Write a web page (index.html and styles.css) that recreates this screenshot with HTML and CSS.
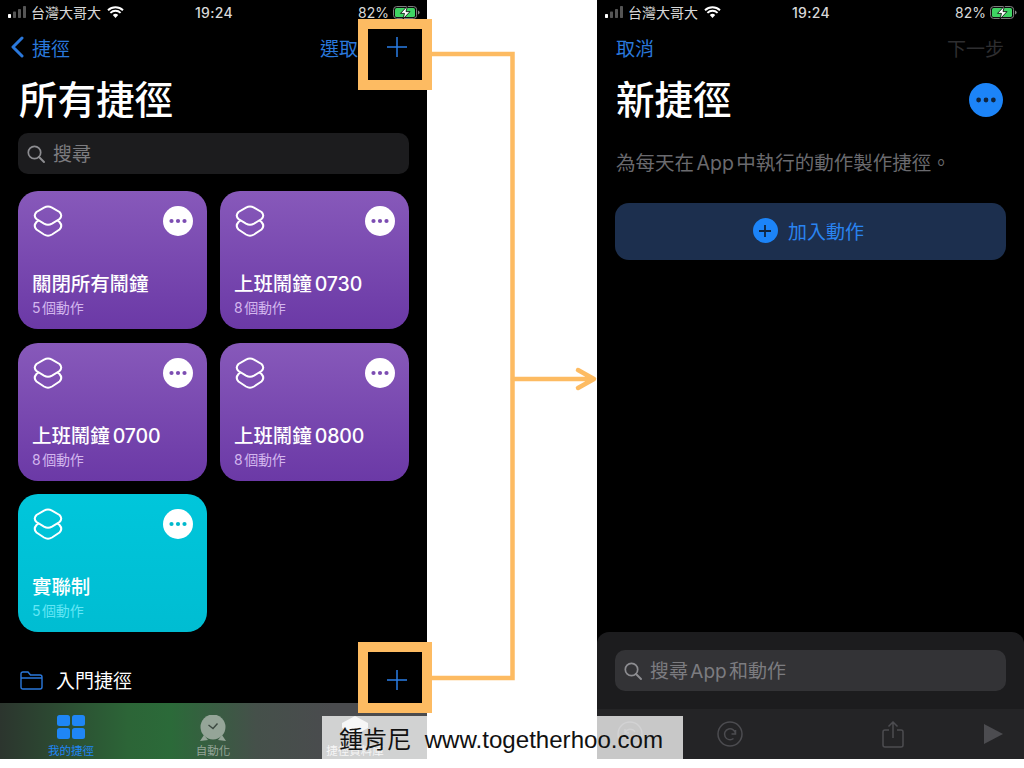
FILE: index.html
```html
<!DOCTYPE html>
<html lang="zh-Hant">
<head>
    <meta charset="UTF-8">
    <meta name="viewport" content="width=device-width, initial-scale=1.0">
    <title>所有捷徑</title>
    <link rel="stylesheet" href="styles.css">
</head>
<body>

<svg class="sprite" width="0" height="0">
    <symbol id="stack" viewBox="0 0 30 33">
        <path d="M11 2.6Q15 .6 19 2.6L26.5 7Q30 10.5 26.5 14L19 18.7Q15 21 11 18.7L3.5 14Q0 10.5 3.5 7Z" fill="none" stroke="currentColor" stroke-width="2"/>
        <path d="M5.5 15.5L3.5 17Q0 21 3.5 24.5L11 29.5Q15 32 19 29.5L26.5 24.5Q30 21 26.5 17L24.5 15.5" fill="none" stroke="currentColor" stroke-width="2"/>
    </symbol>
    <symbol id="dots" viewBox="0 0 30 30">
        <circle cx="8.5" cy="15" r="2.1" fill="currentColor"/>
        <circle cx="15" cy="15" r="2.1" fill="currentColor"/>
        <circle cx="21.5" cy="15" r="2.1" fill="currentColor"/>
    </symbol>
    <symbol id="plus" viewBox="0 0 20 20">
        <path d="M10 0V20M0 10H20" fill="none" stroke="currentColor"/>
    </symbol>
    <symbol id="search" viewBox="0 0 18 18">
        <circle cx="7.5" cy="7.5" r="6.2" fill="none" stroke="currentColor" stroke-width="1.7"/>
        <path d="M12 12L17 17" fill="none" stroke="currentColor" stroke-width="1.9" stroke-linecap="round"/>
    </symbol>
    <symbol id="signal" viewBox="0 0 18 12">
        <rect x="0" y="8" width="3" height="4" rx=".7" fill="#fff"/>
        <rect x="5" y="5.5" width="3" height="6.5" rx=".7" fill="#555"/>
        <rect x="10" y="3" width="3" height="9" rx=".7" fill="#555"/>
        <rect x="15" y="0" width="3" height="12" rx=".7" fill="#555"/>
    </symbol>
    <symbol id="wifi" viewBox="0 0 17 12">
        <path d="M1 4.3A10.8 10.8 0 0 1 16 4.3M3.4 6.9A7.3 7.3 0 0 1 13.6 6.9" fill="none" stroke="#fff" stroke-width="1.9"/>
        <path d="M5.8 9.1A3.9 3.9 0 0 1 11.2 9.1L8.5 12Z" fill="#fff"/>
    </symbol>
    <symbol id="battery" viewBox="0 0 27 13">
        <rect x=".6" y=".6" width="23" height="11.8" rx="3" fill="none" stroke="#8a8a8a" stroke-width="1"/>
        <rect x="2" y="2" width="20" height="9" rx="1.6" fill="#3fd463"/>
        <path d="M25 4.5Q26.6 5 26.6 6.5T25 8.5Z" fill="#8a8a8a"/>
        <path d="M14.5 0L7.5 7.4H11.5L10 13L17 5.6H13Z" fill="#fff" stroke="#000" stroke-width=".8"/>
    </symbol>
</svg>

<div class="stage">

    <div class="phone">
        <div class="status">
            <div class="status-left">
                <svg class="signal"><use href="#signal"/></svg>
                <span>台灣大哥大</span>
                <svg class="wifi"><use href="#wifi"/></svg>
            </div>
            <span class="status-time">19:24</span>
            <div class="status-right">
                <span>82%</span>
                <svg class="battery"><use href="#battery"/></svg>
            </div>
        </div>

        <div class="nav nav-shortcuts">
            <a class="nav-back">
                <svg class="chevron" viewBox="0 0 14 22"><path d="M12 2L3 11L12 20" fill="none" stroke="currentColor" stroke-width="3" stroke-linecap="round" stroke-linejoin="round"/></svg>
                <span>捷徑</span>
            </a>
            <span class="nav-select">選取</span>
            <svg class="plus"><use href="#plus"/></svg>
        </div>

        <h1 class="title title-left">所有捷徑</h1>

        <div class="search search-top">
            <svg class="search-icon"><use href="#search"/></svg>
            <span>搜尋</span>
        </div>

        <div class="cards">
            <div class="card">
                <div class="card-top">
                    <svg class="stack"><use href="#stack"/></svg>
                    <svg class="more"><use href="#dots"/></svg>
                </div>
                <div class="card-name">關閉所有鬧鐘</div>
                <div class="card-count">5 個動作</div>
            </div>
            <div class="card">
                <div class="card-top">
                    <svg class="stack"><use href="#stack"/></svg>
                    <svg class="more"><use href="#dots"/></svg>
                </div>
                <div class="card-name">上班鬧鐘 0730</div>
                <div class="card-count">8 個動作</div>
            </div>
            <div class="card">
                <div class="card-top">
                    <svg class="stack"><use href="#stack"/></svg>
                    <svg class="more"><use href="#dots"/></svg>
                </div>
                <div class="card-name">上班鬧鐘 0700</div>
                <div class="card-count">8 個動作</div>
            </div>
            <div class="card">
                <div class="card-top">
                    <svg class="stack"><use href="#stack"/></svg>
                    <svg class="more"><use href="#dots"/></svg>
                </div>
                <div class="card-name">上班鬧鐘 0800</div>
                <div class="card-count">8 個動作</div>
            </div>
            <div class="card card-cyan">
                <div class="card-top">
                    <svg class="stack"><use href="#stack"/></svg>
                    <svg class="more"><use href="#dots"/></svg>
                </div>
                <div class="card-name">實聯制</div>
                <div class="card-count">5 個動作</div>
            </div>
        </div>

        <div class="folder-row">
            <svg class="folder" viewBox="0 0 23 19"><path d="M1 16V3Q1 1 3 1H8L10.5 4H20Q22 4 22 6V16Q22 18 20 18H3Q1 18 1 16ZM1 7H22" fill="none" stroke="currentColor" stroke-width="1.4"/></svg>
            <span class="folder-name">入門捷徑</span>
            <svg class="plus"><use href="#plus"/></svg>
        </div>

        <div class="tabs">
            <div class="tab tab-active">
                <svg class="tab-icon" viewBox="0 0 28 26">
                    <rect x="0" y="0" width="13" height="11" rx="2.5" fill="currentColor"/>
                    <rect x="15" y="0" width="13" height="11" rx="2.5" fill="currentColor"/>
                    <rect x="0" y="13" width="13" height="11" rx="2.5" fill="currentColor"/>
                    <rect x="15" y="13" width="13" height="11" rx="2.5" fill="currentColor"/>
                </svg>
                <span>我的捷徑</span>
            </div>
            <div class="tab">
                <svg class="tab-icon" viewBox="0 0 28 26">
                    <circle cx="14" cy="12" r="12.500" fill="currentColor"/>
                    <path d="M1 26L5 20L9 25ZM27 26L23 20L19 25Z" fill="currentColor"/>
                    <path d="M9.500 10L14 13.500L18.500 8.500" fill="none" stroke="#3d4a42" stroke-width="1.4"/>
                </svg>
                <span>自動化</span>
            </div>
            <div class="tab tab-gallery">
                <svg class="tab-icon" viewBox="0 0 28 26">
                    <path d="M14 1L27 8V13L14 20L1 13V8Z" fill="currentColor"/>
                </svg>
                <span>捷徑資料庫</span>
            </div>
        </div>
    </div>

    <div class="phone">
        <div class="status">
            <div class="status-left">
                <svg class="signal"><use href="#signal"/></svg>
                <span>台灣大哥大</span>
                <svg class="wifi"><use href="#wifi"/></svg>
            </div>
            <span class="status-time">19:24</span>
            <div class="status-right">
                <span>82%</span>
                <svg class="battery"><use href="#battery"/></svg>
            </div>
        </div>

        <div class="nav nav-new">
            <span class="nav-cancel">取消</span>
            <span class="nav-next">下一步</span>
        </div>

        <div class="new-head">
            <h1 class="title">新捷徑</h1>
            <svg class="more more-blue"><use href="#dots"/></svg>
        </div>

        <p class="intro">為每天在 App 中執行的動作製作捷徑。</p>

        <div class="add-action">
            <span class="add-circle"><svg class="add-plus"><use href="#plus"/></svg></span>
            <span>加入動作</span>
        </div>

        <div class="sheet">
            <div class="search search-sheet">
                <svg class="search-icon"><use href="#search"/></svg>
                <span>搜尋 App 和動作</span>
            </div>
            <div class="toolbar">
                <svg class="tool tool-round" viewBox="0 0 26 26"><circle cx="13" cy="13" r="12" fill="none" stroke="currentColor" stroke-width="1.5"/><path d="M8 15A5.5 5.5 0 0 0 18 14M18 11A5.5 5.5 0 0 0 8 12M8 8V12H12" fill="none" stroke="currentColor" stroke-width="1.5"/></svg>
                <svg class="tool tool-round" viewBox="0 0 26 26"><circle cx="13" cy="13" r="12" fill="none" stroke="currentColor" stroke-width="1.5"/><path d="M18.5 13A5.5 5.5 0 1 0 16.5 17.5M18.5 9V13H14.5" fill="none" stroke="currentColor" stroke-width="1.5"/></svg>
                <svg class="tool tool-share" viewBox="0 0 22 27"><path d="M7 9H3Q1 9 1 11V24Q1 26 3 26H19Q21 26 21 24V11Q21 9 19 9H15M11 17V1M6.5 5.5L11 1L15.5 5.5" fill="none" stroke="currentColor" stroke-width="1.5"/></svg>
                <svg class="tool tool-play" viewBox="0 0 19 20"><path d="M0 0L19 10L0 20Z" fill="currentColor"/></svg>
            </div>
        </div>
    </div>

    <!-- orange callouts drawn over both screens -->
    <svg class="callouts" viewBox="0 0 1024 759">
        <rect x="363" y="24" width="64" height="61"/>
        <rect x="363" y="647" width="64" height="61"/>
        <path d="M432 54H512.500V678H432"/>
        <path d="M513 379H593M578 370L594 379L578 388"/>
    </svg>

    <div class="watermark">鍾肯尼&nbsp; www.togetherhoo.com</div>
</div>

</body>
</html>
```

FILE: styles.css
```css
* {
    box-sizing: border-box;
}
body {
    margin: 0;
    background: #fff;
    font-family: Inter, "Noto Sans CJK TC", sans-serif;
    color: #fff;
}
.sprite {
    position: absolute;
}
.stage {
    position: relative;
    display: flex;
    justify-content: space-between;
    width: 1024px;
    height: 759px;
    overflow: hidden;
}
.phone {
    display: flex;
    flex-direction: column;
    width: 427px;
    height: 759px;
    background: #000;
    overflow: hidden;
}

/* status bar */
.status {
    display: grid;
    grid-template-columns: 1fr auto 1fr;
    align-items: center;
    height: 24px;
    padding: 0 7px 0 8px;
    font-size: 14px;
    color: #d8d8d8;
}
.status-left {
    display: flex;
    align-items: center;
}
.signal {
    width: 18px;
    height: 12px;
    margin-right: 5px;
}
.wifi {
    width: 17px;
    height: 12px;
    margin-left: 6px;
}
.status-time {
    font-size: 14px;
    font-weight: 500;
    letter-spacing: .3px;
}
.status-right {
    display: flex;
    justify-content: flex-end;
    align-items: center;
    gap: 4px;
}
.battery {
    width: 27px;
    height: 13px;
}

/* nav */
.nav {
    display: flex;
    align-items: center;
    height: 48px;
    padding-bottom: 2px;
    font-size: 19px;
    color: #2a78dc;
}
.nav-shortcuts {
    padding-left: 10px;
    padding-right: 20px;
}
.nav-back {
    display: flex;
    align-items: center;
    gap: 8px;
    margin-right: auto;
}
.chevron {
    width: 14px;
    height: 22px;
}
.nav-select {
    margin-right: 29px;
}
.plus {
    flex: none;
    width: 20px;
    height: 20px;
    stroke-width: 1.5;
    color: #2a7ee6;
}
.nav-new {
    justify-content: space-between;
    padding-left: 19px;
    padding-right: 20px;
}
.nav-next {
    color: #2e2e30;
}

/* titles */
.title {
    margin: 0;
    font-size: 38.500px;
    line-height: 56px;
    font-weight: 500;
}
.title-left {
    padding-left: 19px;
}
.new-head {
    display: flex;
    justify-content: space-between;
    align-items: center;
    padding: 0 21px 0 19px;
}

/* search */
.search {
    display: flex;
    align-items: center;
    gap: 8px;
    height: 41px;
    margin: 5px 18px 0;
    padding-left: 9px;
    border-radius: 10px;
    background: #1c1c1e;
    font-size: 19px;
    word-spacing: -3px;
    color: #7c7c80;
}
.search span {
    margin-top: -2px;
}
.search-icon {
    width: 18px;
    height: 18px;
    color: #8d8d91;
}
.search-sheet {
    margin-top: 18px;
    background: #333336;
}

/* shortcut cards */
.cards {
    display: grid;
    grid-template-columns: repeat(2, 189px);
    grid-auto-rows: 138px;
    gap: 13.500px 13px;
    margin: 17px 18px 0;
}
.card {
    display: flex;
    flex-direction: column;
    padding: 14px 14px 0 14px;
    border-radius: 20px;
    background: linear-gradient(#8759ba, #6b39a6);
}
.card-cyan {
    background: linear-gradient(#00c6db, #00bdd2);
}
.card-top {
    display: flex;
    justify-content: space-between;
    height: 65px;
}
.stack {
    width: 30px;
    height: 33px;
    margin-left: 1px;
}
.more {
    flex: none;
    width: 30px;
    height: 30px;
    margin-top: 1px;
    border-radius: 50%;
    background: #fff;
    color: #7c4db2;
}
.card-cyan .more {
    color: #00b8cc;
}
.card-name {
    font-size: 19.500px;
    line-height: 28px;
    font-weight: 500;
    word-spacing: -2px;
    letter-spacing: -.1px;
}
.card-count {
    margin-top: 1px;
    font-size: 14px;
    line-height: 18px;
    word-spacing: -2px;
    letter-spacing: -.2px;
    color: #d3b6ee;
}
.card-cyan .card-count {
    color: #63e6f5;
}
.more-blue {
    width: 34px;
    height: 34px;
    margin: 0;
    background: #1c84f8;
    color: #10253f;
}

/* folder row */
.folder-row {
    display: flex;
    align-items: center;
    height: 24px;
    margin-top: 36px;
    padding: 0 20px;
}
.folder {
    width: 23px;
    height: 19px;
    color: #2a78dc;
}
.folder-name {
    flex: 1;
    margin-top: -2px;
    margin-left: 13px;
    font-size: 19px;
}

/* tab bar */
.tabs {
    display: flex;
    flex: 1;
    margin-top: 11px;
    padding-top: 12px;
    background: linear-gradient(90deg, #2c352e 0, #2c6537 30%, #2b6a39 40%, #45504a 60%, #4a4b4e 78%);
}
.tab {
    display: flex;
    flex-direction: column;
    align-items: center;
    width: 142px;
    font-size: 11.500px;
    color: #95a598;
}
.tab-icon {
    width: 28px;
    height: 26px;
}
.tab span {
    margin-top: 2px;
    line-height: 16px;
}
.tab-active {
    color: #1f86f5;
}
.tab-gallery {
    color: #dadada;
}

/* right screen */
.intro {
    margin: 21px 0 0;
    padding-left: 19px;
    font-size: 19.500px;
    line-height: 28px;
    word-spacing: -3px;
    color: #6a6a6e;
}
.add-action {
    display: flex;
    justify-content: center;
    align-items: center;
    gap: 10px;
    height: 57px;
    margin: 26px 18px 0;
    padding: 0 4px 2px 0;
    border-radius: 14px;
    background: #1c2f4e;
    font-size: 19px;
    color: #2a84f0;
}
.add-circle {
    display: flex;
    justify-content: center;
    align-items: center;
    width: 25px;
    height: 25px;
    border-radius: 50%;
    background: #1c84f8;
}
.add-plus {
    width: 12px;
    height: 12px;
    stroke-width: 3;
    color: #10253f;
}
.sheet {
    display: flex;
    flex-direction: column;
    flex: 1;
    margin-top: 372px;
    border-radius: 12px 12px 0 0;
    background: #1c1c1e;
}
.toolbar {
    display: flex;
    flex: 1;
    align-items: center;
    margin-top: 18px;
    background: #242426;
    color: #4c4c50;
}
.tool {
    flex: none;
}
.tool-round {
    width: 26px;
    height: 26px;
    margin-left: 20px;
}
.tool-round + .tool-round {
    margin-left: 74px;
}
.tool-share {
    width: 22px;
    height: 27px;
    margin-left: 139px;
}
.tool-play {
    width: 19px;
    height: 20px;
    margin-left: 80px;
}

/* things lying over the screens */
.callouts {
    position: absolute;
    left: 0;
    top: 0;
    width: 1024px;
    height: 759px;
    fill: none;
    stroke: #fdbb62;
}
.callouts rect {
    stroke-width: 10;
}
.callouts path {
    stroke-width: 4.500;
}
.callouts path:last-child {
    stroke-linecap: round;
    stroke-linejoin: round;
}
.watermark {
    position: absolute;
    left: 322px;
    top: 716px;
    width: 361px;
    height: 43px;
    padding-left: 17px;
    background: rgba(255, 255, 255, .75);
    font-family: "Liberation Sans", "Noto Sans CJK TC", sans-serif;
    font-size: 24.100px;
    line-height: 47px;
    color: #111;
    white-space: nowrap;
}
```
